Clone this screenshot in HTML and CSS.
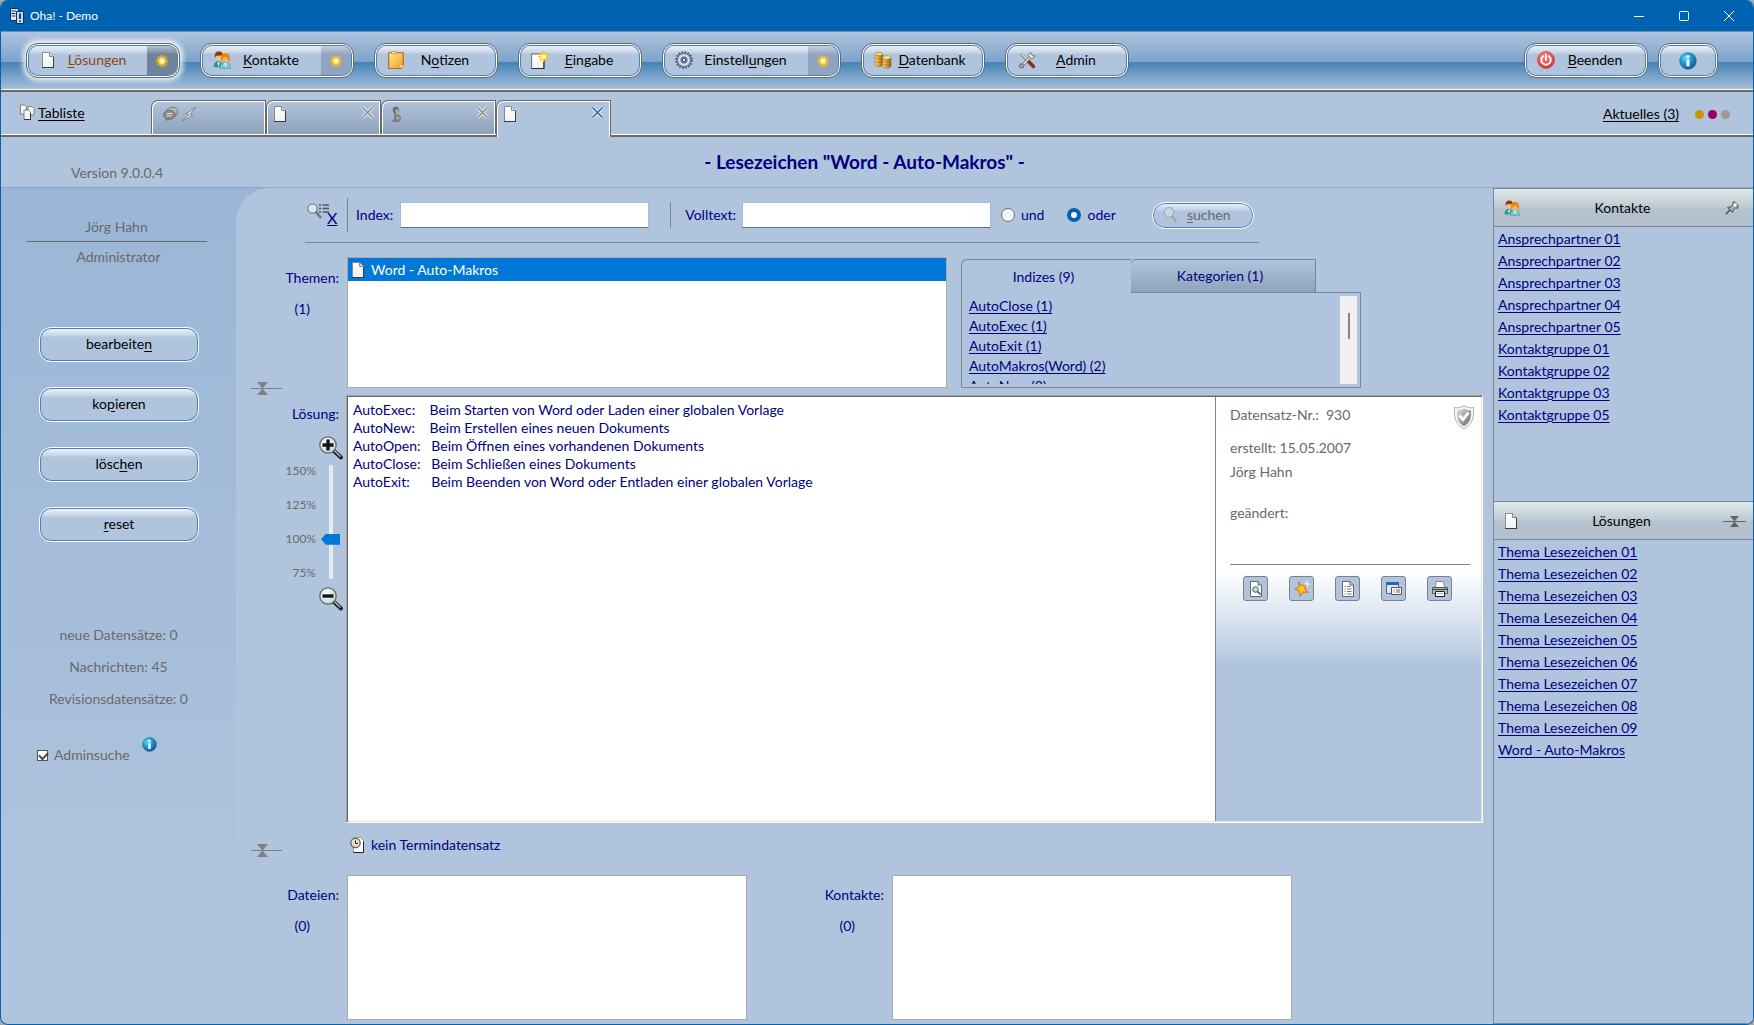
FILE: index.html
```html
<!DOCTYPE html>
<html lang="de">
<head>
<meta charset="utf-8">
<title>Oha! - Demo</title>
<link rel="stylesheet" href="styles.css">
</head>
<body>
<svg class="sprite" width="0" height="0" aria-hidden="true">
  <defs>
    <linearGradient id="gPage" x1="0" y1="0" x2="0" y2="1"><stop offset="0" stop-color="#fff"/><stop offset="1" stop-color="#eef0f2"/></linearGradient>
    <linearGradient id="gNote" x1="0" y1="0" x2="1" y2="1"><stop offset="0" stop-color="#ffe68a"/><stop offset="1" stop-color="#ee9a28"/></linearGradient>
    <linearGradient id="gGold" x1="0" y1="0" x2="1" y2="0"><stop offset="0" stop-color="#f8dc80"/><stop offset=".5" stop-color="#d8a030"/><stop offset="1" stop-color="#8a5c14"/></linearGradient>
    <radialGradient id="gInfo" cx=".35" cy=".3" r=".8"><stop offset="0" stop-color="#4fe0f8"/><stop offset=".5" stop-color="#2090cc"/><stop offset="1" stop-color="#14467e"/></radialGradient>
    <radialGradient id="gPower" cx=".4" cy=".3" r=".8"><stop offset="0" stop-color="#f88a80"/><stop offset="1" stop-color="#cc2820"/></radialGradient>
    <radialGradient id="gLens" cx=".4" cy=".35" r=".7"><stop offset="0" stop-color="#fff"/><stop offset="1" stop-color="#b8d4dc"/></radialGradient>
    <linearGradient id="gShield" x1="0" y1="0" x2="1" y2="1"><stop offset="0" stop-color="#e0e0e0"/><stop offset="1" stop-color="#686868"/></linearGradient>
  </defs>
  <symbol id="doc" viewBox="0 0 16 16"><path d="M1.500.5h7l4 4v11h-11z" fill="url(#gPage)" stroke="#8a8a8a"/><path d="M1 15.500h12M12.500 5v10.500" stroke="#3c3c3c" fill="none"/><path d="M8.500.5v4h4" fill="#d8d8d8" stroke="#8a8a8a"/></symbol>
  <symbol id="star" viewBox="0 0 16 16"><path d="M8 1v14M1 8h14M3.200 3.200l9.600 9.600M12.800 3.200l-9.600 9.600" stroke="#ffb400" stroke-width="1.800"/><path d="M5.600 1.800l4.800 12.400M10.400 1.800L5.600 14.200M1.800 5.600l12.400 4.800M14.200 5.600L1.800 10.400" stroke="#ffd23c" stroke-width=".9"/><circle cx="8" cy="8" r="3.600" fill="#ffe650"/><circle cx="8" cy="8" r="2.400" fill="#fffce0"/></symbol>
  <symbol id="people" viewBox="0 0 16 16"><path d="M.6 14.500c0-4 1.500-5.500 4-5.500s4 1.500 4 5.500z" fill="#2a9c8c"/><path d="M6.500 15.500c0-4 1.800-5.500 4.500-5.500s4.500 1.500 4.500 5.500z" fill="#7accd0" stroke="#3a98a0" stroke-width=".5"/><path d="M4 10l1 4 1-4zM10 10.500l1 4 1.200-4z" fill="#fff"/><circle cx="5" cy="5.200" r="3.200" fill="#f4c08c"/><path d="M1.600 6C1.400 1.500 3 .3 5.200.4S9 1.500 8.500 4.500C6 3.500 4 4.500 3 4.300z" fill="#8a3c10"/><circle cx="11" cy="6.400" r="3.100" fill="#fbb468"/><path d="M7.300 9.500C6.600 4 8 2 11 2s4.500 2 3.800 7.500C13 9 13.600 5.800 12 5.300s-2.500.5-3.200 1.200C8.500 7.500 8.600 9 7.300 9.500z" fill="#f08000"/></symbol>
  <symbol id="note" viewBox="0 0 16 16"><path d="M1.500 1.500h13v11l-2 3h-11z" fill="url(#gNote)" stroke="#b06c14"/><path d="M4 .5h4v2H4z" fill="#f8e8a0" stroke="#b88a30" stroke-width=".6"/><path d="M14.500 12.500l-3 .2 1 2.800z" fill="#ffe8a0"/></symbol>
  <symbol id="docnew" viewBox="0 0 16 16"><path d="M.5 2.500h11v13H.5z" fill="url(#gPage)" stroke="#777"/><path d="M.5 15.500h11V8" fill="none" stroke="#2c2c2c"/><path d="M11 .3v9.400M6.300 5h9.400M7.700 1.700l6.600 6.600M14.300 1.700L7.700 8.300" stroke="#ffc020" stroke-width="1.500"/><circle cx="11" cy="5" r="2.600" fill="#fff060"/><circle cx="11" cy="5" r="1.300" fill="#fffce0"/></symbol>
  <symbol id="gear" viewBox="0 0 18 18"><circle cx="9" cy="9" r="7.600" fill="#aab6c6" stroke="#4c5a70" stroke-width="2.400" stroke-dasharray="1.800 1.200"/><circle cx="9" cy="9" r="6.600" fill="#c8d2de" stroke="#5e6c86"/><circle cx="9" cy="9" r="4.300" fill="#6c86b0" stroke="#e8eef6"/><circle cx="9" cy="9" r="1.900" fill="#dfe7f2" stroke="#30405c"/></symbol>
  <symbol id="db" viewBox="0 0 18 18"><g stroke="#8a6018" stroke-width=".5"><path d="M1 3v11c1 2 7 2 8 0V3z" fill="url(#gGold)"/><ellipse cx="5" cy="3" rx="4" ry="1.700" fill="#f4d884"/><path d="M1 6.500c1 2 7 2 8 0M1 10c1 2 7 2 8 0" fill="none"/><path d="M8.500 6.500v9c1 2 7.500 2 8.500 0v-9z" fill="url(#gGold)"/><ellipse cx="12.700" cy="6.500" rx="4.200" ry="1.700" fill="#fbe8a8"/><path d="M8.500 9.500c1 2 7.500 2 8.500 0M8.500 12.500c1 2 7.500 2 8.500 0" fill="none"/></g></symbol>
  <symbol id="tools" viewBox="0 0 18 18"><path d="M3 3l9 9" stroke="#555" stroke-width="2.400"/><path d="M3.300 3l9 9" stroke="#f0f0f0" stroke-width="1.200"/><path d="M15 3.500L4 15" stroke="#666" stroke-width="2.800"/><path d="M15 3.500L4 15" stroke="#eee" stroke-width="1.400"/><path d="M11 11l4.500 4.500" stroke="#8c2c1c" stroke-width="3.400" stroke-linecap="round"/><path d="M13 1.500a3 3 0 1 0 3.800 3.300l-2.200.2-1-1.500z" fill="#f2f2f2" stroke="#666" stroke-width=".8"/><circle cx="3.500" cy="14.800" r="1.900" fill="none" stroke="#777" stroke-width="1.400"/></symbol>
  <symbol id="power" viewBox="0 0 18 18"><circle cx="9" cy="9" r="8.500" fill="url(#gPower)" stroke="#c83c34" stroke-width=".6"/><path d="M6 5.200a4.800 4.800 0 1 0 6 0M9 3.500v5.500" fill="none" stroke="#fff" stroke-width="1.800" stroke-linecap="round"/></symbol>
  <symbol id="info" viewBox="0 0 18 18"><circle cx="9" cy="9" r="8.300" fill="url(#gInfo)" stroke="#1d6ca4" stroke-width=".7"/><circle cx="9" cy="4.800" r="1.600" fill="#fff"/><path d="M7.500 7.500h3v6.700H7.500z" fill="#fff"/></symbol>
  <symbol id="copies" viewBox="0 0 16 16"><g fill="url(#gPage)" stroke="#777" stroke-width=".9"><path d="M.5 1h4l2 2v7h-6z"/><path d="M8 2.500h4l2 2V11H8z"/><path d="M4 6h4.500l2 2v7.500H4z"/></g><path d="M4 15.500h6.500V9" stroke="#333" fill="none"/></symbol>
  <symbol id="chat" viewBox="0 0 34 16"><path d="M3.500 4.500C5 .5 14 0 14.500 5c.3 3-1.500 5-3.500 6z" fill="#b8b8b8" stroke="#777"/><path d="M2 15.500l.8-4 4 1.500z" fill="#8a8a8a"/><ellipse cx="6.500" cy="8.700" rx="5.800" ry="4.500" fill="#8c8c8c" stroke="#6c6c6c"/><path d="M3.500 7.500h6M3.500 9.800h5" stroke="#e4e4e4"/><path d="M33 1L23 7.800l2.800.8L19 15l11-5.500-3-1z" fill="#d8dce4" stroke="#808080" stroke-width=".9"/></symbol>
  <symbol id="person" viewBox="0 0 12 16"><path d="M2.500 4C2.500 1.500 4 .5 6 .5S9.500 2 9 5c-.5 2-1.500 3-3 3S3 6.500 2.500 4z" fill="#707070"/><path d="M5.500 3.500h2.800L8 7.500H6z" fill="#b4b4b4"/><path d="M4.500 7.500l2.500 2 1.500-1 2 3-1.500 4H2.500l2-3z" fill="#888" stroke="#666" stroke-width=".6"/><circle cx="8" cy="12" r="2.300" fill="#aaa" stroke="#666" stroke-width=".7"/></symbol>
  <symbol id="cross" viewBox="0 0 13 13"><path d="M1.500 1.500l10 10M11.500 1.500l-10 10" stroke="#fff" stroke-width="3.400" opacity=".75"/><path d="M1.500 1.500l10 10M11.500 1.500l-10 10" stroke="currentColor" stroke-width="1.600"/></symbol>
  <symbol id="filter" viewBox="0 0 22 18"><circle cx="5.500" cy="5.500" r="4.700" fill="#c8f0f8" stroke="#808080" stroke-width="1.200"/><path d="M9 9l5 6" stroke="#707070" stroke-width="2.200"/><path d="M12 2h2M12 5.500h2M12 9h2M15.500 2h6.500M15.500 5.500h6.500M15.500 9h6.500" stroke="#55555c" stroke-width="1.500"/></symbol>
  <symbol id="lens" viewBox="0 0 16 16"><circle cx="6" cy="5.500" r="4.800" fill="#ccd6e2" stroke="#a4acb6" stroke-width="1.200"/><path d="M9 9.300l4.500 5.500" stroke="#9aa2aa" stroke-width="1.800"/></symbol>
  <symbol id="zoomin" viewBox="0 0 24 24"><path d="M15 15l7 6.500" stroke="#222" stroke-width="4" stroke-linecap="round"/><path d="M15.500 14.800l6 5.800" stroke="#ccc" stroke-width="1.200"/><circle cx="9" cy="9" r="8.200" fill="url(#gLens)" stroke="#666" stroke-width="1.200"/><path d="M9 3.500v11M3.500 9h11" stroke="#141414" stroke-width="3.400"/></symbol>
  <symbol id="zoomout" viewBox="0 0 24 24"><path d="M15 15l7 6.500" stroke="#222" stroke-width="4" stroke-linecap="round"/><path d="M15.500 14.800l6 5.800" stroke="#ccc" stroke-width="1.200"/><circle cx="9" cy="9" r="8.200" fill="url(#gLens)" stroke="#666" stroke-width="1.200"/><path d="M3.500 9h11" stroke="#141414" stroke-width="3.400"/></symbol>
  <symbol id="collapse" viewBox="0 0 31 14"><path d="M0 7.500h31" stroke="currentColor"/><path d="M6 1h11l-5.500 6.500zM6 14h11l-5.500-6.500z" fill="currentColor"/></symbol>
  <symbol id="collapseR" viewBox="0 0 23 12"><path d="M0 6.500h23" stroke="currentColor"/><path d="M7 1h9l-4.500 5.500zM7 12h9l-4.500-5.500z" fill="currentColor"/></symbol>
  <symbol id="pin" viewBox="0 0 14 14"><path d="M5 9L.8 13.200" stroke="#444" stroke-width="1.400"/><path d="M2.500 6.500l5 5 .8-2.300 2.200-2.200 2 .2.800-2.200L9.500.8 7.800 1.500l.2 2-2.500 2.300z" fill="#a8a8a8" stroke="#444" stroke-width=".9"/><circle cx="10" cy="4" r="1.700" fill="#fff"/></symbol>
  <symbol id="shield" viewBox="0 0 22 25"><path d="M1.500 2.500c4 1 7-.5 9.500-1.500 2.500 1 5.500 2.500 9.500 1.500.5 9 0 16-9.500 21.500C1.500 18.500 1 11.500 1.500 2.500z" fill="#f6f6f6" stroke="#b0b0b0"/><path d="M4 5c3 .5 5-.5 7-1.500 2 1 4 2 7 1.500.3 7 0 12-7 16.300C4 17 3.700 12 4 5z" fill="url(#gShield)"/><path d="M6.500 10.500l3.500 4 5.500-7" stroke="#fff" stroke-width="2.800" fill="none"/></symbol>
  <symbol id="preview" viewBox="0 0 16 16"><path d="M2.500.5h7.500l3.500 3.500v11.500h-11z" fill="#fff" stroke="#666"/><path d="M10 .5V4h3.500" fill="#ccc" stroke="#666"/><circle cx="7.500" cy="8.500" r="2.800" fill="#b4e4f0" stroke="#555"/><path d="M9.500 10.500l3 3" stroke="#444" stroke-width="1.600"/></symbol>
  <symbol id="fav" viewBox="0 0 16 16"><path d="M4.500 1.500l3.300 3.200 4.700-1-1.800 4 3.300 3.600-4.800-.3L6 15l-.8-4.800L1 8l4.200-2z" fill="#f8cc14" stroke="#d8782c" stroke-width="1.100"/><path d="M13 0v6M10 3h6" stroke="#fff"/></symbol>
  <symbol id="list" viewBox="0 0 16 16"><path d="M2.500.5h7.500l3.500 3.500v11.500h-11z" fill="#fff" stroke="#666"/><path d="M10 .5V4h3.500" fill="#ccc" stroke="#666"/><path d="M4.500 5.500h1.200M4.500 8h1.200M4.500 10.500h1.200M4.500 13h1.200M7 5.500h3.500M7 8h4.500M7 10.500h4.500M7 13h4.500" stroke="#777"/></symbol>
  <symbol id="windows" viewBox="0 0 16 16"><path d="M.5 1.500h12v11H.5z" fill="#dce6f2" stroke="#4a6a94"/><path d="M0 1h13v3H0z" fill="#2a62b4"/><path d="M5.500 6.500h10v7h-10z" fill="#f8f8f8" stroke="#555"/><path d="M7.500 9h1M10 9h4M7.500 11h1M10 11h4" stroke="#666"/></symbol>
  <symbol id="printer" viewBox="0 0 16 16"><path d="M4 .5h7.500l1 6h-9z" fill="#fff" stroke="#888"/><path d="M.5 6.500h15v6H.5z" fill="#c8ccd0" stroke="#555"/><path d="M1 8.500h14" stroke="#444" stroke-width="1.400"/><path d="M3.500 10.500h9v5h-9z" fill="#fff" stroke="#222"/><path d="M5 12.500h6" stroke="#aaa"/><path d="M13 7.300h1.500" stroke="#3a3"/></symbol>
  <symbol id="appt" viewBox="0 0 14 16"><path d="M3.500.5h7l3 3v12h-10z" fill="#fff" stroke="#999"/><path d="M3.500 15.500h10v-11" fill="none" stroke="#222"/><circle cx="5.500" cy="6" r="4.700" fill="#e8dcc4" stroke="#6c6454" stroke-width="1.300"/><path d="M5.500 3.500V6.500h2.500" fill="none" stroke="#222"/></symbol>
  <symbol id="app" viewBox="0 0 14 16"><path d="M.5.5h8v12h-8z" fill="#dfe8f4" stroke="#0a2f63"/><path d="M1.500 3h5M1.500 5.500h4M1.500 8h4" stroke="#0a2f63" stroke-width="1.200"/><path d="M6.500 3.500h7v12h-7z" fill="#c8d8f0" stroke="#0a2f63"/><path d="M10 5.500v5.500M10 12.500v1.500" stroke="#0a2f63" stroke-width="1.800"/></symbol>
</svg>

<div class="window">
  <header class="titlebar">
    <svg class="app-icon"><use href="#app"/></svg>
    <span class="app-name">Oha! - Demo</span>
    <div class="window-controls">
      <button type="button" aria-label="Minimieren"><svg viewBox="0 0 10 10"><path d="M0 5.500h10" stroke="#fff"/></svg></button>
      <button type="button" aria-label="Maximieren"><svg viewBox="0 0 10 10"><rect x=".5" y=".5" width="9" height="9" rx="1" fill="none" stroke="#fff"/></svg></button>
      <button type="button" aria-label="Schließen"><svg viewBox="0 0 10 10"><path d="M0 0l10 10M10 0L0 10" stroke="#fff"/></svg></button>
    </div>
  </header>

  <nav class="toolbar">
    <div class="tool split active"><button type="button" class="tool-main"><svg><use href="#doc"/></svg><span><u>L</u>ösungen</span></button><button type="button" class="tool-new" aria-label="Neue Lösung"><svg><use href="#star"/></svg></button></div>
    <div class="tool split"><button type="button" class="tool-main"><svg><use href="#people"/></svg><span><u>K</u>ontakte</span></button><button type="button" class="tool-new" aria-label="Neuer Kontakt"><svg><use href="#star"/></svg></button></div>
    <div class="tool"><button type="button" class="tool-main"><svg><use href="#note"/></svg><span>N<u>o</u>tizen</span></button></div>
    <div class="tool"><button type="button" class="tool-main"><svg><use href="#docnew"/></svg><span><u>E</u>ingabe</span></button></div>
    <div class="tool split wide"><button type="button" class="tool-main"><svg><use href="#gear"/></svg><span>Einstell<u>u</u>ngen</span></button><button type="button" class="tool-new" aria-label="Neue Einstellung"><svg><use href="#star"/></svg></button></div>
    <div class="tool"><button type="button" class="tool-main"><svg><use href="#db"/></svg><span><u>D</u>atenbank</span></button></div>
    <div class="tool"><button type="button" class="tool-main"><svg><use href="#tools"/></svg><span><u>A</u>dmin</span></button></div>
    <div class="toolbar-end">
      <div class="tool"><button type="button" class="tool-main"><svg><use href="#power"/></svg><span><u>B</u>eenden</span></button></div>
      <div class="tool icon-only"><button type="button" class="tool-main" aria-label="Info"><svg><use href="#info"/></svg></button></div>
    </div>
  </nav>

  <div class="tabrow">
    <a class="tablist-link" href="#"><svg><use href="#copies"/></svg><span>Tabliste</span></a>
    <div class="tabs">
      <div class="tab"><button type="button" class="tab-main first" aria-label="Nachrichten"><svg class="chat"><use href="#chat"/></svg></button></div>
      <div class="tab"><button type="button" class="tab-main" aria-label="Lösung"><svg><use href="#doc"/></svg></button><button type="button" class="tab-close" aria-label="Tab schließen"><svg><use href="#cross"/></svg></button></div>
      <div class="tab"><button type="button" class="tab-main" aria-label="Kontakt"><svg><use href="#person"/></svg></button><button type="button" class="tab-close" aria-label="Tab schließen"><svg><use href="#cross"/></svg></button></div>
      <div class="tab current"><button type="button" class="tab-main" aria-label="Lesezeichen"><svg><use href="#doc"/></svg></button><button type="button" class="tab-close" aria-label="Tab schließen"><svg><use href="#cross"/></svg></button></div>
    </div>
    <div class="news">
      <a href="#">Aktuelles (3)</a>
      <span class="dots"><i class="dot gold"></i><i class="dot plum"></i><i class="dot grey"></i></span>
    </div>
  </div>

  <div class="heading">
    <span class="version">Version 9.0.0.4</span>
    <h1>- Lesezeichen "Word - Auto-Makros" -</h1>
  </div>

  <div class="body">
    <aside class="sidebar">
      <div class="user">Jörg Hahn</div>
      <div class="role">Administrator</div>
      <div class="actions">
        <button type="button" class="action">bearbeite<u>n</u></button>
        <button type="button" class="action">ko<u>p</u>ieren</button>
        <button type="button" class="action">lösc<u>h</u>en</button>
        <button type="button" class="action"><u>r</u>eset</button>
      </div>
      <div class="stats">
        <span>neue Datensätze: 0</span>
        <span>Nachrichten: 45</span>
        <span>Revisionsdatensätze: 0</span>
      </div>
      <div class="admin-search">
        <input type="checkbox" id="adminsuche" checked><label for="adminsuche">Adminsuche</label>
        <svg><use href="#info"/></svg>
      </div>
    </aside>

    <main class="content">
      <form class="search">
        <button type="button" class="clear" aria-label="Suche zurücksetzen"><svg><use href="#filter"/></svg><span>X</span></button>
        <div class="field index"><label for="index">Index:</label><input type="text" id="index"></div>
        <div class="field fulltext"><label for="volltext">Volltext:</label><input type="text" id="volltext"></div>
        <div class="mode">
          <span><input type="radio" name="mode" id="und"><label for="und">und</label></span>
          <span><input type="radio" name="mode" id="oder" checked><label for="oder">oder</label></span>
        </div>
        <button type="button" class="find" disabled><svg><use href="#lens"/></svg><span><u>s</u>uchen</span></button>
      </form>

      <section class="row topics">
        <div class="side-label"><span>Themen:</span><span class="count">(1)</span><button type="button" class="collapse" aria-label="Themen einklappen"><svg><use href="#collapse"/></svg></button></div>
        <ul class="listbox">
          <li class="selected"><svg><use href="#doc"/></svg>Word - Auto-Makros</li>
        </ul>
        <div class="index-panel">
          <div class="index-tabs"><button type="button" class="current">Indizes (9)</button><button type="button">Kategorien (1)</button></div>
          <div class="index-body">
            <div class="index-links">
              <a href="#">AutoClose (1)</a>
              <a href="#">AutoExec (1)</a>
              <a href="#">AutoExit (1)</a>
              <a href="#">AutoMakros(Word) (2)</a>
              <a href="#">AutoNew (2)</a>
            </div>
            <div class="scrollbar"><span></span></div>
          </div>
        </div>
      </section>

      <section class="row solution">
        <div class="side-label">
          <label for="loesung">Lösung:</label>
          <div class="zoom">
            <button type="button" aria-label="Vergrößern"><svg><use href="#zoomin"/></svg></button>
            <div class="zoom-scale">
              <div class="zoom-marks"><span>150%</span><span>125%</span><span>100%</span><span>75%</span></div>
              <input type="range" min="75" max="150" value="100" aria-label="Zoom">
            </div>
            <button type="button" aria-label="Verkleinern"><svg><use href="#zoomout"/></svg></button>
          </div>
        </div>
        <div class="record">
          <textarea id="loesung" readonly>AutoExec:    Beim Starten von Word oder Laden einer globalen Vorlage
AutoNew:    Beim Erstellen eines neuen Dokuments
AutoOpen:   Beim Öffnen eines vorhandenen Dokuments
AutoClose:   Beim Schließen eines Dokuments
AutoExit:      Beim Beenden von Word oder Entladen einer globalen Vorlage</textarea>
          <div class="meta">
            <div class="meta-text">
              <p class="number">Datensatz-Nr.:&nbsp; 930<svg><use href="#shield"/></svg></p>
              <p class="created">erstellt: 15.05.2007</p>
              <p class="author">Jörg Hahn</p>
              <p class="changed">geändert:</p>
            </div>
            <div class="meta-tools">
              <button type="button" aria-label="Vorschau"><svg><use href="#preview"/></svg></button>
              <button type="button" aria-label="Favorit"><svg><use href="#fav"/></svg></button>
              <button type="button" aria-label="Dokument"><svg><use href="#list"/></svg></button>
              <button type="button" aria-label="Fenster"><svg><use href="#windows"/></svg></button>
              <button type="button" aria-label="Drucken"><svg><use href="#printer"/></svg></button>
            </div>
          </div>
        </div>
      </section>

      <section class="row appointment">
        <div class="side-label"><button type="button" class="collapse" aria-label="Anlagen einklappen"><svg><use href="#collapse"/></svg></button></div>
        <p><svg><use href="#appt"/></svg>kein Termindatensatz</p>
      </section>

      <section class="row attachments">
        <div class="side-label"><span>Dateien:</span><span class="count">(0)</span></div>
        <ul class="listbox"></ul>
        <div class="side-label second"><span>Kontakte:</span><span class="count">(0)</span></div>
        <ul class="listbox"></ul>
      </section>
    </main>

    <aside class="history">
      <section class="contacts">
        <h2><svg><use href="#people"/></svg><span>Kontakte</span><svg class="pin"><use href="#pin"/></svg></h2>
        <ul>
          <li><a href="#">Ansprechpartner 01</a></li>
          <li><a href="#">Ansprechpartner 02</a></li>
          <li><a href="#">Ansprechpartner 03</a></li>
          <li><a href="#">Ansprechpartner 04</a></li>
          <li><a href="#">Ansprechpartner 05</a></li>
          <li><a href="#">Kontaktgruppe 01</a></li>
          <li><a href="#">Kontaktgruppe 02</a></li>
          <li><a href="#">Kontaktgruppe 03</a></li>
          <li><a href="#">Kontaktgruppe 05</a></li>
        </ul>
      </section>
      <section class="solutions">
        <h2><svg><use href="#doc"/></svg><span>Lösungen</span><svg class="fold"><use href="#collapseR"/></svg></h2>
        <ul>
          <li><a href="#">Thema Lesezeichen 01</a></li>
          <li><a href="#">Thema Lesezeichen 02</a></li>
          <li><a href="#">Thema Lesezeichen 03</a></li>
          <li><a href="#">Thema Lesezeichen 04</a></li>
          <li><a href="#">Thema Lesezeichen 05</a></li>
          <li><a href="#">Thema Lesezeichen 06</a></li>
          <li><a href="#">Thema Lesezeichen 07</a></li>
          <li><a href="#">Thema Lesezeichen 08</a></li>
          <li><a href="#">Thema Lesezeichen 09</a></li>
          <li><a href="#">Word - Auto-Makros</a></li>
        </ul>
      </section>
    </aside>
  </div>
</div>
</body>
</html>
```
FILE: styles.css
```css
:root {
  --frame: #0063b1;
  --base: #b0c4de;
  --steel: #4682b4;
  --slate: #778899;
  --line: #696969;
  --muted: #696969;
  --navy: #000080;
  --gloss: linear-gradient(rgba(255, 255, 255, .75), rgba(255, 255, 255, .25) 7px, transparent 8px);
  --tab-fill: linear-gradient(#b0c4de, #8fa2bc);
}

* { box-sizing: border-box; }

body {
  margin: 0;
  background: #a8a8a8;
  color: #000;
  font: 14px/20px Lato, "Liberation Sans", sans-serif;
}

.sprite { position: absolute; }
svg { display: block; flex: none; width: 16px; height: 16px; }
ul { list-style: none; margin: 0; padding: 0; }
p { margin: 0; }
button { padding: 0; border: 0; background: none; color: inherit; font: inherit; }
input, textarea { font: inherit; }
a { color: inherit; text-underline-offset: 2px; }
u { text-underline-offset: 2px; }

.window {
  display: flex;
  flex-direction: column;
  min-height: 100vh;
  border: 1px solid var(--frame);
  border-top: 0;
  border-radius: 8px;
  background: var(--base);
  overflow: hidden;
}

/* Title bar */
.titlebar {
  display: flex;
  align-items: center;
  height: 31px;
  padding: 0 2px 0 9px;
  background: var(--frame);
  color: #fff;
  font-size: 12px;
}
.app-icon { width: 14px; height: 16px; }
.app-name { margin-left: 6px; }
.window-controls { display: flex; margin-left: auto; }
.window-controls button { display: grid; place-items: center; width: 45px; height: 30px; }
.window-controls svg { width: 10px; height: 10px; }

/* Toolbar */
.toolbar {
  display: flex;
  gap: 20px;
  height: 61px;
  padding: 11px 35px 0 25px;
  border-top: 1px solid #708db0;
  border-bottom: 2px solid var(--line);
  box-shadow: inset 0 -1px #fff;
  background: linear-gradient(#b0c4de, #7ba2cb 52%, #4682b4 52%, #a9c1dc);
}
.toolbar-end { display: flex; gap: 10px; margin-left: auto; }
.tool {
  display: flex;
  width: 124px;
  height: 35px;
  padding: 2px;
  border: 1px solid var(--line);
  border-radius: 12px;
  background: var(--base);
  box-shadow: inset 0 0 0 1px #fff, inset 0 0 0 2px var(--steel);
}
.tool.split { width: 154px; }
.tool.wide { width: 179px; }
.tool.icon-only { width: 60px; }
.tool.active {
  color: #8b4513;
  box-shadow: inset 0 0 0 1px #fff, inset 0 0 0 2px var(--steel), 0 0 5px 3px rgba(255, 255, 255, .8);
}
.tool-main {
  display: flex;
  flex: 1;
  align-items: center;
  padding: 0 10px 2px;
  border-radius: 9px;
  background: var(--gloss);
}
.split .tool-main { border-radius: 9px 0 0 9px; }
.tool-main span { flex: 1; text-align: center; }
.tool-main svg { width: 18px; height: 18px; }
.active .tool-main { padding-left: 12px; }
.active .tool-main svg { width: 16px; height: 16px; }
.icon-only .tool-main { justify-content: center; padding: 0; }
.tool-new {
  display: grid;
  place-items: center;
  width: 30px;
  border-radius: 0 9px 9px 0;
  background: linear-gradient(rgba(255, 255, 255, .5), rgba(255, 255, 255, .1) 7px, transparent 8px), #90a3c1;
}
.tool-new svg { width: 14px; height: 14px; }
.active .tool-new { background-color: #6f8498; }

/* Tab row */
.tabrow {
  display: flex;
  height: 45px;
  padding: 8px 23px 0 19px;
  border-bottom: 2px solid var(--line);
  box-shadow: inset 0 -1px #fff;
}
.tablist-link { display: flex; gap: 2px; width: 131px; height: 16px; margin-top: 4px; line-height: 18px; }
.tabs { display: flex; }
.tab {
  display: flex;
  align-items: flex-start;
  justify-content: space-between;
  width: 115px;
  height: 34px;
  padding: 5px 6px 0;
  border: 1px solid var(--line);
  border-bottom: 0;
  border-top-left-radius: 7px;
  background: var(--tab-fill);
  box-shadow: inset 1px 1px #fff, inset -1px 0 #fff;
  color: #8c8c8c;
}
.tab.current { height: 37px; background: var(--base); color: #2c6ba6; }
.tab-main { width: 16px; }
.tab-main.first { width: 34px; margin-left: 5px; }
.tab-main .chat { width: 34px; }
.tab-close svg { width: 13px; height: 13px; }
.news { display: flex; gap: 16px; align-items: center; height: 28px; margin-left: auto; }
.dots { display: flex; gap: 4px; }
.dot { width: 9px; height: 9px; border-radius: 50%; }
.dot.gold { background: #c89600; }
.dot.plum { background: #960064; }
.dot.grey { background: #a09898; }

/* Heading */
.heading {
  display: grid;
  grid-template-columns: 235px 1fr 260px;
  height: 51px;
  border-bottom: 1px solid #8fa6c8;
  text-align: center;
}
.version { align-self: end; padding: 0 3px 4px 0; color: var(--muted); }
h1 { margin: 0; color: var(--navy); font-size: 19px; line-height: 50px; }

.body {
  display: grid;
  flex: 1;
  grid-template-columns: 235px 1fr 260px;
  background: linear-gradient(#9ab6d6, var(--base)) no-repeat 0 0 / 300px 757px;
}

/* Sidebar */
.sidebar { padding: 29px 25px 0; color: var(--muted); text-align: center; }
.user { width: 181px; height: 25px; border-bottom: 1px solid var(--line); }
.role { margin-top: 5px; }
.actions { display: grid; gap: 25px; margin: 60px 12px 0 13px; }
.action {
  height: 35px;
  padding-bottom: 2px;
  border: 1px solid #fff;
  border-radius: 12px;
  background: var(--gloss) no-repeat 0 1px, var(--base);
  box-shadow: inset 0 0 0 1px var(--steel);
  color: #000;
}
.stats { display: grid; gap: 12px; margin-top: 83px; }
.admin-search { display: flex; align-items: center; gap: 6px; margin: 36px 0 0 11px; }
.admin-search svg { align-self: flex-start; width: 15px; height: 15px; margin: -8px 0 0 6px; }
input[type="checkbox"] {
  width: 11px;
  height: 11px;
  margin: 0;
  border: 1px solid #555;
  appearance: none;
  background: #fff;
}
input[type="checkbox"]:checked::before {
  content: "";
  display: block;
  width: 7px;
  height: 4px;
  margin: 1px;
  border: solid #444;
  border-width: 0 0 2px 2px;
  transform: rotate(-45deg);
}

/* Content */
.content {
  display: flex;
  flex-direction: column;
  padding-bottom: 4px;
  border-top-left-radius: 34px;
  background: var(--base);
  color: var(--navy);
}
.search {
  display: flex;
  align-items: center;
  width: 954px;
  height: 55px;
  margin: 0 0 14px 69px;
  border-bottom: 1px solid var(--slate);
}
.clear { display: flex; align-items: flex-end; width: 42px; padding-left: 2px; color: var(--navy); font-size: 16px; text-decoration: underline; }
.clear svg { width: 22px; height: 18px; align-self: flex-start; }
.clear span { margin-left: -2px; line-height: 18px; padding-top: 6px; }
.field { display: flex; align-items: center; border-left: 1px solid var(--slate); }
.field input {
  width: 249px;
  height: 26px;
  padding: 0 4px;
  border: 1px solid #a5bbdc;
  border-bottom-color: #62707e;
  background: #fff;
}
.field.index { gap: 7px; height: 34px; padding-left: 8px; }
.field.fulltext { gap: 6px; height: 26px; margin-left: 21px; padding-left: 14px; }
.mode { display: flex; gap: 23px; margin-left: 10px; }
.mode span { display: flex; align-items: center; gap: 6px; }
.mode input {
  width: 14px;
  height: 14px;
  margin: 0;
  border: 1px solid #707070;
  border-radius: 50%;
  appearance: none;
  background: #f3f3f3;
}
.mode input:checked { border: 4px solid #0063b1; background: #fff; }
.find {
  display: flex;
  align-items: center;
  gap: 8px;
  width: 102px;
  height: 27px;
  margin-left: auto;
  margin-right: 5px;
  padding-left: 10px;
  border: 1px solid #fff;
  border-radius: 13px;
  background: var(--gloss);
  box-shadow: inset 0 0 0 1px var(--steel);
  color: var(--muted);
}

.row { display: flex; }
.side-label { display: flex; flex: none; flex-direction: column; width: 111px; padding-right: 8px; text-align: right; }
.side-label .count { margin-top: 11px; padding-right: 29px; }
.collapse { color: #808080; }
.collapse svg { width: 31px; height: 14px; }
.listbox { border: 1px solid #ababab; background: #fff; color: #000; }

.topics { height: 131px; }
.topics .side-label { padding-top: 11px; }
.topics .collapse { align-self: flex-start; margin: auto 0 -7px 15px; }
.topics .listbox { flex: 0 1 600px; }
.listbox .selected { display: flex; gap: 4px; align-items: center; height: 23px; padding-left: 3px; background: #0078d7; color: #fff; }

.index-panel { flex: 0 0 400px; display: flex; flex-direction: column; margin: 2px 132px 0 14px; }
.index-tabs { display: flex; height: 33px; }
.index-tabs button {
  width: 186px;
  height: 34px;
  padding-right: 6px;
  border: 1px solid var(--slate);
  border-top-left-radius: 6px;
  background: var(--tab-fill);
}
.index-tabs .current { width: 170px; margin-right: -1px; border-width: 1px 0 0 1px; background: var(--base); position: relative; }
.index-body { display: flex; flex: 1; min-height: 0; padding: 3px 3px 3px 7px; border: 1px solid var(--slate); }
.index-links { flex: 1; overflow: hidden; }
.index-links a { display: table; }
.scrollbar { width: 17px; padding: 17px 0 0 8px; background: #f0f0f0; }
.scrollbar span { display: block; width: 2px; height: 26px; background: #858585; }

.solution { flex: 1; margin-top: 7px; }
.solution .side-label { width: 110px; padding: 9px 7px 0 0; }
.zoom { display: flex; flex-direction: column; align-items: flex-end; margin: 12px -4px 0 0; }
.zoom svg { width: 24px; height: 24px; }
.zoom-scale { display: flex; gap: 5px; height: 114px; margin: 5px 3px 8px 0; color: var(--muted); font-size: 12px; line-height: 12px; }
.zoom-marks { display: flex; flex-direction: column; justify-content: space-between; }
.zoom input {
  width: 19px;
  height: 114px;
  margin: 0;
  appearance: none;
  background: linear-gradient(#e7eaea, #e7eaea) no-repeat 8px 0 / 4px 100%;
  direction: rtl;
  writing-mode: vertical-lr;
}
.zoom input::-webkit-slider-thumb {
  width: 19px;
  height: 11px;
  appearance: none;
  background: #0078d7;
  clip-path: polygon(5px 0, 100% 0, 100% 100%, 5px 100%, 0 50%);
}

.record {
  display: flex;
  flex: 1;
  margin-right: 10px;
  border: 1px solid;
  border-color: #a0a0a0 #fff #fff #a0a0a0;
  background: #fff;
  box-shadow: inset 1px 1px #696969, inset -1px -1px #e3e3e3;
  padding: 1px;
}
textarea {
  flex: 1;
  padding: 4px 5px;
  border: 0;
  outline: 0;
  background: #fff;
  color: var(--navy);
  line-height: 18px;
  resize: none;
}
.meta {
  width: 266px;
  border-left: 1px solid var(--slate);
  background: linear-gradient(#fff 175px, #e6edf5 205px, var(--base) 270px);
  color: var(--muted);
}
.meta-text { height: 168px; margin: 0 11px 0 14px; padding-top: 8px; border-bottom: 1px solid var(--slate); }
.number { display: flex; justify-content: space-between; height: 33px; }
.number svg { width: 22px; height: 25px; margin-right: -5px; }
.created { height: 24px; }
.author { height: 41px; }
.meta-tools { display: flex; gap: 21px; padding: 11px 0 0 27px; }
.meta-tools button { display: grid; place-items: center; width: 25px; height: 25px; border: 1px solid #7c8088; border-radius: 3px; background: var(--base); }

.appointment { align-items: center; height: 52px; }
.appointment .side-label { padding: 2px 0 0 15px; }
.appointment p { display: flex; gap: 7px; align-items: center; padding: 0 0 8px 3px; }
.appointment p svg { width: 14px; }

.attachments { height: 145px; }
.attachments .side-label { padding-top: 10px; }
.attachments .second { width: 145px; }
.attachments .listbox { flex: 0 1 400px; }

/* History column */
.history { display: flex; flex-direction: column; border: solid var(--slate); border-width: 0 0 1px 1px; background: var(--base); color: var(--navy); }
.contacts { height: 313px; }
.history h2 {
  display: flex;
  align-items: center;
  justify-content: space-between;
  height: 39px;
  margin: 0;
  padding: 0 14px 0 10px;
  border: solid var(--slate);
  border-width: 1px 0;
  background: linear-gradient(#dfe9e9, #bdc9d2 50%, #b4c1cf 51%, #b4c0cb);
  color: #000;
  font-size: 14px;
  font-weight: 400;
}
.history .solutions h2 { padding-right: 7px; }
.pin { width: 14px; height: 14px; }
.fold { width: 23px; height: 12px; color: #606468; }
.history li { height: 22px; padding-left: 4px; line-height: 23px; }
```
